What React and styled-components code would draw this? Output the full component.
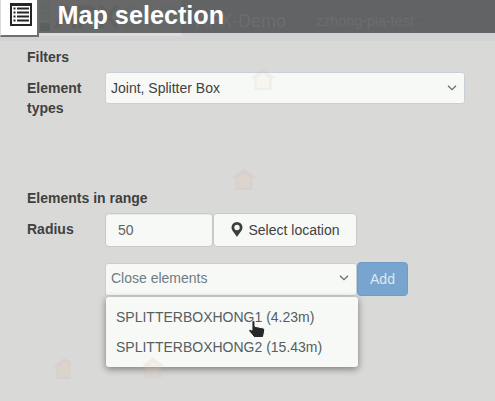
import React from "react";
import styled, { createGlobalStyle } from "styled-components";

const GlobalStyle = createGlobalStyle`
  * { box-sizing: border-box; }
  body {
    margin: 0;
    background: #d9d9d8;
    font: 14px/20px "Liberation Sans", Arial, sans-serif;
    color: #3f413f;
    overflow: hidden;
  }
`;

const Page = styled.div`
  position: relative;
  height: 401px;
  background: #d9d9d8;
  overflow: hidden;
`;

const Header = styled.header`
  position: relative;
  display: flex;
  height: 33px;
  background: #626365;
`;

const Strip = styled.div`
  height: 8px;
  background: #d2d3d5;
`;

const IconTile = styled.div`
  position: relative;
  z-index: 2;
  flex: none;
  width: 39px;
  height: 37px;
  padding: 3px 0 0 9px;
  background: #fff;
  border: solid #707070;
  border-width: 0 2px 2px 1px;
  border-left-color: #d8d8d8;
`;

const Title = styled.h1`
  position: relative;
  z-index: 2;
  margin: 0 0 0 18.5px;
  font-size: 25.2px;
  line-height: 30px;
  color: #fff;
  white-space: nowrap;
`;

const LogoPlate = styled.div`
  position: absolute;
  left: 39px;
  top: 0;
  width: 142px;
  height: 36px;
  background: linear-gradient(#686868 33px, #dcdcdb 33px);
`;

const LogoSquares = styled.svg`
  position: absolute;
  left: 0;
  top: 0;
`;

const LogoText = styled.span`
  position: absolute;
  left: 16px;
  top: 0;
  font-size: 32px;
  line-height: 34px;
  white-space: nowrap;
  color: #606161;
  -webkit-text-stroke: 1px currentColor;

  em {
    font-style: normal;
    letter-spacing: 2px;
    color: #616967;
  }
`;

const Ghost = styled.span`
  position: absolute;
  left: ${(p) => p.$x}px;
  top: ${(p) => p.$y}px;
  font-size: ${(p) => p.$size}px;
  line-height: 20px;
  color: #6c6d6e;
  white-space: nowrap;
`;

const GhostCaret = styled.i`
  position: absolute;
  left: 417px;
  top: 19px;
  border: solid transparent;
  border-width: 4px 4px 0;
  border-top-color: #5c616b;
`;

const MapMarker = styled.svg`
  position: absolute;
  z-index: 4;
  left: ${(p) => p.$x}px;
  top: ${(p) => p.$y}px;
  opacity: ${(p) => p.$opacity};
`;

const Form = styled.main`
  padding: 6px 0 0 27px;
`;

const Section = styled.h2`
  margin: 0;
  font-size: 14px;
  line-height: 20px;
`;

const Row = styled.div`
  display: flex;
  align-items: flex-start;
  margin-top: ${(p) => p.$gap}px;
`;

const Label = styled.label`
  width: 78px;
  padding-top: ${(p) => p.$top}px;
  padding-right: 15px;
  font-weight: bold;
`;

const Select = styled.div`
  display: flex;
  align-items: center;
  justify-content: space-between;
  width: ${(p) => p.$w}px;
  height: ${(p) => p.$h}px;
  padding: 0 7px ${(p) => p.$lift}px 5px;
  color: ${(p) => (p.$muted ? "#6f7c82" : "#3f413f")};
  background: #f7f9f7;
  border: 1px solid #c8d0d6;
  border-radius: 3px;
`;

const Input = styled.input`
  width: 108px;
  height: 34px;
  padding: 0 12px;
  font: inherit;
  color: #616361;
  background: #f7f9f7;
  border: 1px solid #c8cac8;
  border-radius: 4px;
  box-shadow: inset 0 1px 1px rgba(0, 0, 0, 0.06);
`;

const LocationButton = styled.button`
  display: flex;
  align-items: center;
  gap: 5.5px;
  width: 144px;
  height: 34px;
  padding: 0 0 0 17px;
  font: inherit;
  color: #3f413f;
  background: #f7f9f7;
  border: 1px solid #c8cac8;
  border-radius: 4px;

  svg {
    margin-top: -2px;
  }
`;

const AddButton = styled.button`
  width: 51px;
  height: 34px;
  padding: 0;
  font: inherit;
  color: #dfe8ef;
  background: #78a4d0;
  border: 1px solid #6f9bc8;
  border-radius: 4px;
`;

const Combo = styled.div`
  position: relative;
  padding-top: 1px;
`;

const Menu = styled.ul`
  position: absolute;
  left: 1px;
  top: 35px;
  width: 252px;
  height: 70px;
  margin: 0;
  padding: 5px 0;
  list-style: none;
  color: #565e62;
  background: #f7f9f7;
  border-radius: 3px;
  box-shadow: 0 2px 7px rgba(0, 0, 0, 0.45);
`;

const Option = styled.li`
  height: 30px;
  padding-left: 10px;
  line-height: 30px;
  white-space: nowrap;
`;

const Cursor = styled.svg`
  position: absolute;
  z-index: 5;
  left: 248px;
  top: 320px;
`;

const Chevron = () => (
  <svg width="10" height="6" viewBox="0 0 10 6" fill="none" stroke="#686d70" strokeWidth="1.3">
    <path d="M1 .8 5 4.6 9 .8" />
  </svg>
);

const ListIcon = () => (
  <svg width="22" height="23" viewBox="0 0 22 23" fill="none" stroke="#252525">
    <rect x="1" y="1" width="20" height="21" strokeWidth="2" />
    <path d="M0 1.5h22" strokeWidth="3" />
    <path d="M7 5.5h12M7 9.5h12M7 13.5h12M7 17.5h12" strokeWidth="2" />
    <path d="M3.5 5.5h2M3.5 9.5h2M3.5 13.5h2M3.5 17.5h2" strokeWidth="2" />
  </svg>
);

const Pin = () => (
  <svg width="12" height="15" viewBox="0 0 12 15">
    <path
      fill="#3c3e3d"
      fillRule="evenodd"
      d="M6 0a5.5 5.5 0 0 0-5.5 5.5C.5 8.6 4 11.4 6 15 8 11.4 11.5 8.6 11.5 5.5A5.5 5.5 0 0 0 6 0Zm0 2.8a2.7 2.7 0 1 1 0 5.4 2.7 2.7 0 0 1 0-5.4Z"
    />
  </svg>
);

const house = "M.5 10 13 1 25.500 10H21.500V22H4.500V10Z";
const clippedHouse = "M.5 10 12 1 19 4.500V22H4.500V10Z";
const hexHouse = "M2 9 13 .5 24 9H21.500V21H4.500V9Z";

const markers = [
  { x: 250, y: 68, opacity: 0.16, fill: "#fbe3cf", shape: house },
  { x: 231, y: 168, opacity: 0.22, fill: "#dec7a2", shape: house },
  { x: 52, y: 357, opacity: 0.22, fill: "#dec7a2", shape: clippedHouse },
  { x: 140, y: 357, opacity: 0.2, fill: "#e4c7b2", shape: hexHouse },
];

export default function App() {
  return (
    <Page>
      <GlobalStyle />
      <Header>
        <LogoPlate aria-hidden="true">
          <LogoSquares width="12" height="33" fill="#616968">
            <rect x="1" y="2" width="10" height="8" />
            <rect x="1" y="12" width="10" height="8" />
            <rect x="1" y="23" width="10" height="8" fill="#5d5e5e" />
          </LogoSquares>
          <LogoText>APX<em>GIS</em></LogoText>
        </LogoPlate>
        <Ghost $x={196} $y={11} $size={18}>APX-Demo</Ghost>
        <Ghost $x={316} $y={11} $size={14.3}>zzhong-pia-test</Ghost>
        <GhostCaret />
        <IconTile><ListIcon /></IconTile>
        <Title>Map selection</Title>
      </Header>
      <Strip />
      <Form>
        <Section>Filters</Section>
        <Row $gap={5}>
          <Label $top={6}>Element types</Label>
          <Select $w={360} $h={32} $lift={0}>Joint, Splitter Box<Chevron /></Select>
        </Row>
        <Row as={Section} $gap={70}>Elements in range</Row>
        <Row $gap={5}>
          <Label $top={6}>Radius</Label>
          <Input defaultValue="50" aria-label="Radius" />
          <LocationButton><Pin />Select location</LocationButton>
        </Row>
        <Row $gap={15}>
          <Label $top={0} />
          <Combo>
            <Select $w={252} $h={33} $lift={3} $muted>Close elements<Chevron /></Select>
            <Menu>
              <Option>SPLITTERBOXHONG1 (4.23m)</Option>
              <Option>SPLITTERBOXHONG2 (15.43m)</Option>
            </Menu>
          </Combo>
          <AddButton>Add</AddButton>
        </Row>
      </Form>
      {markers.map((m) => (
        <MapMarker key={`${m.x}-${m.y}`} $x={m.x} $y={m.y} $opacity={m.opacity} width="26" height="24" viewBox="0 0 26 24">
          <path d={m.shape} fill="#d8b5ae" />
          <path d="M6.500 10 13 5 19 10V20H6.500Z" fill={m.fill} />
        </MapMarker>
      ))}
      <Cursor width="18" height="19" viewBox="0 0 18 19">
        <path
          d="M3.900 1.700C3.900.3 7 .3 7 1.700V6.300L14.500 7.800C16 8.100 16.700 9 16.600 10.300 16.500 12.800 16 14.500 15 17.600H6.200L1 11.300C.3 9.800 1.800 8.800 3 9.500L3.900 10.200Z"
          fill="#282828"
          stroke="#fff"
          strokeWidth="1"
        />
      </Cursor>
    </Page>
  );
}
